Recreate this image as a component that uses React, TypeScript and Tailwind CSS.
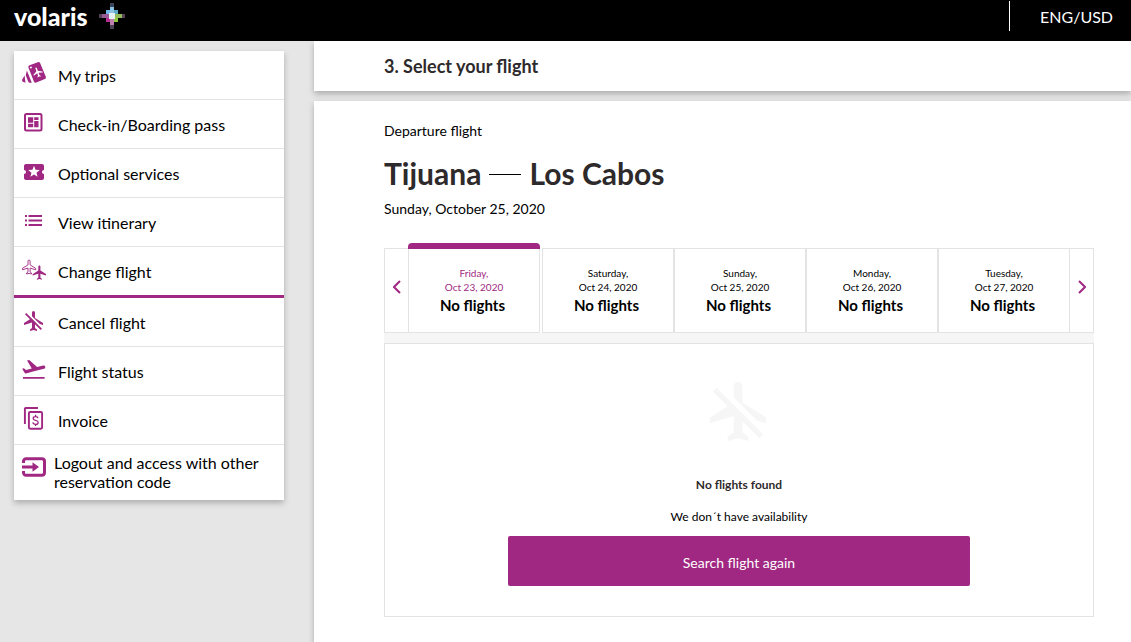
import type { ReactNode } from "react";

const PLANE =
  "M21 16v-2l-8-5V3.5c0-.83-.67-1.5-1.5-1.5S10 2.67 10 3.5V9l-8 5v2l8-2.5V19l-2 1.5V22l3.5-1 3.5 1v-1.5L13 19v-5.5l8 2.5z";
const PLANE_OFF =
  "M13 9V3.5a1.5 1.5 0 0 0-3 0v3.68l7.83 7.83L21 16v-2l-8-5zM3 5.27l4.99 4.99L2 14v2l8-2.5V19l-2 1.5V22l3.5-1 3.5 1v-1.5L13 19v-3.73L18.73 21 20 19.73 4.27 4 3 5.27z";

function Icon({ children, className = "size-6" }: { children: ReactNode; className?: string }) {
  return (
    <svg viewBox="0 0 24 24" fill="currentColor" aria-hidden="true" className={`shrink-0 ${className}`}>
      {children}
    </svg>
  );
}

type Item = { label: string; icon: ReactNode; active?: boolean };

const items: Item[] = [
  {
    label: "My trips",
    icon: (
      <>
        <path d="M7.600 3.300 15.800.2c1-.4 1.900 0 2.300.9l5.700 13.600c.4 1 0 1.900-.9 2.300l-8.600 3.600c-1 .4-1.900 0-2.300-.9L6.500 5.700c-.4-1 0-2 1.100-2.400z" />
        <path d="M4.900 8.500 9.800 20.700H8.100c-1 0-1.600-.5-1.900-1.300L3.700 13.200zM2.600 13.500l.9 7.200-2-.7C.3 19.500-.2 18.600.2 17.500z" />
        <circle cx="8.900" cy="5.400" r="1" fill="white" />
        <g transform="translate(15.600 10.300) rotate(-20) scale(.5) translate(-11.500 -12)" fill="white">
          <path d={PLANE} />
        </g>
      </>
    ),
  },
  {
    label: "Check-in/Boarding pass",
    icon: (
      <>
        <rect x="3" y="3" width="16.500" height="16.500" rx="1.500" fill="none" stroke="currentColor" strokeWidth="2" />
        <path d="M6 6.200h5.200v5.600H6zM12.200 6.200h4.300v2.800h-4.300zM12.200 10h4.300v6.300h-4.300zM6 12.700h5.200v3.600H6z" />
      </>
    ),
  },
  {
    label: "Optional services",
    icon: (
      <path d="M20 12c0-1.100.9-2 2-2V6c0-1.100-.9-2-2-2H4c-1.100 0-1.990.9-1.990 2v4c1.100 0 1.990.9 1.990 2s-.89 2-2 2v4c0 1.100.9 2 2 2h16c1.100 0 2-.9 2-2v-4c-1.100 0-2-.9-2-2zm-4.420 4.800L12 14.500l-3.580 2.300 1.080-4.120-3.290-2.690 4.240-.25L12 5.800l1.540 3.950 4.240.25-3.290 2.690 1.090 4.110z" />
    ),
  },
  {
    label: "View itinerary",
    icon: <path d="M3 6h2v2H3zM3 10.500h2v2H3zM3 15h2v2H3zM6.500 6H20v2H6.500zM6.500 10.500H20v2H6.500zM6.500 15H20v2H6.500z" />,
  },
  {
    label: "Change flight",
    active: true,
    icon: (
      <>
        <g transform="translate(-1 .6) scale(.7)" fill="none" stroke="currentColor" strokeWidth="1.300">
          <path d={PLANE} />
        </g>
        <g transform="translate(9.200 6.200) scale(.71)">
          <path d={PLANE} />
        </g>
      </>
    ),
  },
  { label: "Cancel flight", icon: <path d={PLANE_OFF} /> },
  {
    label: "Flight status",
    icon: (
      <g transform="translate(-1.900 -1.900) scale(1.140 1.100)">
        <path d="M2.500 19h19v1.600h-19zm19.570-9.360c-.21-.8-1.040-1.280-1.840-1.060L14.920 10l-6.900-6.430-1.930.51 4.140 7.170-4.970 1.330-1.970-1.540-1.450.39 1.820 3.160.77 1.330 1.600-.43 5.310-1.420 4.350-1.160L21 11.490c.81-.23 1.280-1.050 1.070-1.850z" />
      </g>
    ),
  },
  {
    label: "Invoice",
    icon: (
      <>
        <path d="M2.900 17V1.800c0-.5.300-.8.800-.8H16" fill="none" stroke="currentColor" strokeWidth="1.900" />
        <rect x="6.900" y="5" width="13.200" height="16.800" rx="1.200" fill="none" stroke="currentColor" strokeWidth="1.900" />
        <path
          d="M16.100 11.200c-.2-1-1.200-1.600-2.500-1.600-1.500 0-2.500.7-2.500 1.800 0 2.700 5.100 1.100 5.100 4 0 1.200-1.100 1.900-2.600 1.900s-2.600-.7-2.800-1.900M13.600 7.800v1.800M13.600 17.300v1.800"
          fill="none"
          stroke="currentColor"
          strokeWidth="1.300"
        />
      </>
    ),
  },
];

const days = [
  { day: "Friday,", date: "Oct 23, 2020", active: true },
  { day: "Saturday,", date: "Oct 24, 2020" },
  { day: "Sunday,", date: "Oct 25, 2020" },
  { day: "Monday,", date: "Oct 26, 2020" },
  { day: "Tuesday,", date: "Oct 27, 2020" },
];

function LogoMark() {
  return (
    <svg viewBox="0 0 26 26" className="size-[26px]" aria-hidden="true">
      <path d="M11 0h4v26h-4z" fill="#4a4458" />
      <path d="M0 11h26v4H0z" fill="#574158" />
      <path d="M11 0h4v4h-4z" fill="#39465c" />
      <path d="M7 7h6v6H7z" fill="#6fb5e6" />
      <path d="M13 7h6v6h-6z" fill="#5ba9c9" />
      <path d="M7 13h6v6H7z" fill="#b62c92" />
      <path d="M13 13h6v6h-6z" fill="#8cc63f" />
      <path d="M11 4h4v7h-4z" fill="#8cc4e8" />
      <path d="M3 11h8v4H3z" fill="#9a5a96" />
      <path d="M15 11h8v4h-8z" fill="#93bb5c" />
      <path d="M11 15h4v7h-4z" fill="#c080ae" />
      <path d="M10 10h6v6h-6z" fill="#e4f2f5" />
    </svg>
  );
}

function Chevron({ next }: { next?: boolean }) {
  return (
    <svg viewBox="0 0 8 14" className="h-[14px] w-2" fill="none" stroke="currentColor" strokeWidth="2" aria-hidden="true">
      <path d={next ? "M1 1l6 6-6 6" : "M7 1L1 7l6 6"} />
    </svg>
  );
}

export default function App() {
  return (
    <div className="flex min-h-screen flex-col bg-[#e6e6e6] font-['Lato',sans-serif] text-black">
      <header className="z-10 flex h-[41px] items-start justify-between bg-black pl-[14px] pr-[18px] text-white">
        <a href="#home" className="flex items-center gap-[11px] pt-[3px]">
          <span className="text-[25px] leading-[26px] font-black">volaris</span>
          <LogoMark />
        </a>
        <button type="button" className="mt-px h-[30px] border-l border-white pt-px pl-[30px] text-base leading-[30px]">
          ENG/USD
        </button>
      </header>

      <div className="flex flex-1">
        <nav className="mt-[10px] ml-[14px] w-[270px] shrink-0 self-start bg-white shadow-[0_3px_6px_rgba(0,0,0,0.25)]">
          <ul>
            {items.map((item) => (
              <li
                key={item.label}
                className={item.active ? "border-b-[3px] border-[#a02882]" : "border-b border-[#e3e3e3]"}
              >
                <a href="#menu" className="flex h-12 items-start gap-3 pl-2 text-base">
                  <Icon className="mt-[11px] size-6 text-[#a02882]">{item.icon}</Icon>
                  <span className="pt-[2px] leading-[46px]">{item.label}</span>
                </a>
              </li>
            ))}
            <li>
              <a href="#logout" className="flex items-start gap-2 pt-2 pr-4 pb-[9px] pl-2 text-base leading-[19px]">
                <Icon className="mt-[2px] size-6 text-[#a02882]">
                  <path
                    d="M1.500 8V6.500c0-1.600 1-2.700 2.700-2.700h15.600c1.700 0 2.700 1.100 2.700 2.700v11c0 1.600-1 2.700-2.700 2.700H4.200c-1.700 0-2.700-1.100-2.700-2.700V16"
                    fill="none"
                    stroke="currentColor"
                    strokeWidth="3"
                  />
                  <path d="M0 10.500h10.500V7.300l6.500 4.700-6.500 4.700v-3.200H0z" />
                </Icon>
                <span>Logout and access with other reservation code</span>
              </a>
            </li>
          </ul>
        </nav>

        <main className="ml-[30px] flex min-w-0 flex-1 flex-col gap-[10px]">
          <div className="bg-white pl-[70px] shadow-[0_3px_6px_rgba(0,0,0,0.25)]">
            <h1 className="text-lg leading-[50px] font-bold text-[#2e2a2b]">3. Select your flight</h1>
          </div>

          <section className="flex-1 bg-white pt-5 pr-[37px] pb-6 pl-[70px] shadow-[0_3px_6px_rgba(0,0,0,0.25)]">
            <p className="text-sm leading-5">Departure flight</p>
            <h2 className="mt-3 flex items-center gap-2 text-[30px] leading-10 font-bold text-[#2e2a2b]">
              <span>Tijuana</span>
              <span className="mt-[2px] h-px w-8 bg-black" />
              <span>Los Cabos</span>
            </h2>
            <p className="mt-[6px] text-sm leading-5">Sunday, October 25, 2020</p>

            <div className="mt-[29px] flex h-[85px] bg-white">
              <button
                type="button"
                aria-label="Previous days"
                className="flex w-6 items-center justify-center border-y border-l border-[#e3e3e3] pb-[7px] text-[#a02882]"
              >
                <Chevron />
              </button>
              {days.map((d) => (
                <button
                  key={d.date}
                  type="button"
                  className={
                    d.active
                      ? "relative mr-[2px] flex-1 border border-[#e3e3e3] pt-px text-center"
                      : "flex-1 border border-[#e3e3e3] pt-px text-center"
                  }
                >
                  {d.active && <span className="absolute -inset-x-px -top-[6px] h-[6px] rounded-t-sm bg-[#a02882]" />}
                  <span className={d.active ? "block text-[10px] leading-[14px] text-[#a02882]" : "block text-[10px] leading-[14px]"}>
                    {d.day}
                    <br />
                    {d.date}
                  </span>
                  <span className="block pr-[3px] text-[15px] leading-[22px] font-bold">No flights</span>
                </button>
              ))}
              <button
                type="button"
                aria-label="Next days"
                className="flex w-6 items-center justify-center border-y border-r border-[#e3e3e3] pb-[7px] text-[#a02882]"
              >
                <Chevron next />
              </button>
            </div>

            <div className="h-[10px] bg-[#f6f6f6]" />

            <div className="flex flex-col items-center border border-[#e3e3e3] px-[123px] pt-8 pb-[30px]">
              <Icon className="size-[71px] text-[#f6f6f6]">
                <path d={PLANE_OFF} />
              </Icon>
              <h3 className="mt-7 text-xs leading-5 font-bold text-[#2e2a2b]">No flights found</h3>
              <p className="mt-3 text-xs leading-5">We don´t have availability</p>
              <button type="button" className="mt-[9px] h-[50px] w-full rounded-xs bg-[#a02882] pt-[3px] text-sm text-white">
                Search flight again
              </button>
            </div>
          </section>
        </main>
      </div>
    </div>
  );
}
